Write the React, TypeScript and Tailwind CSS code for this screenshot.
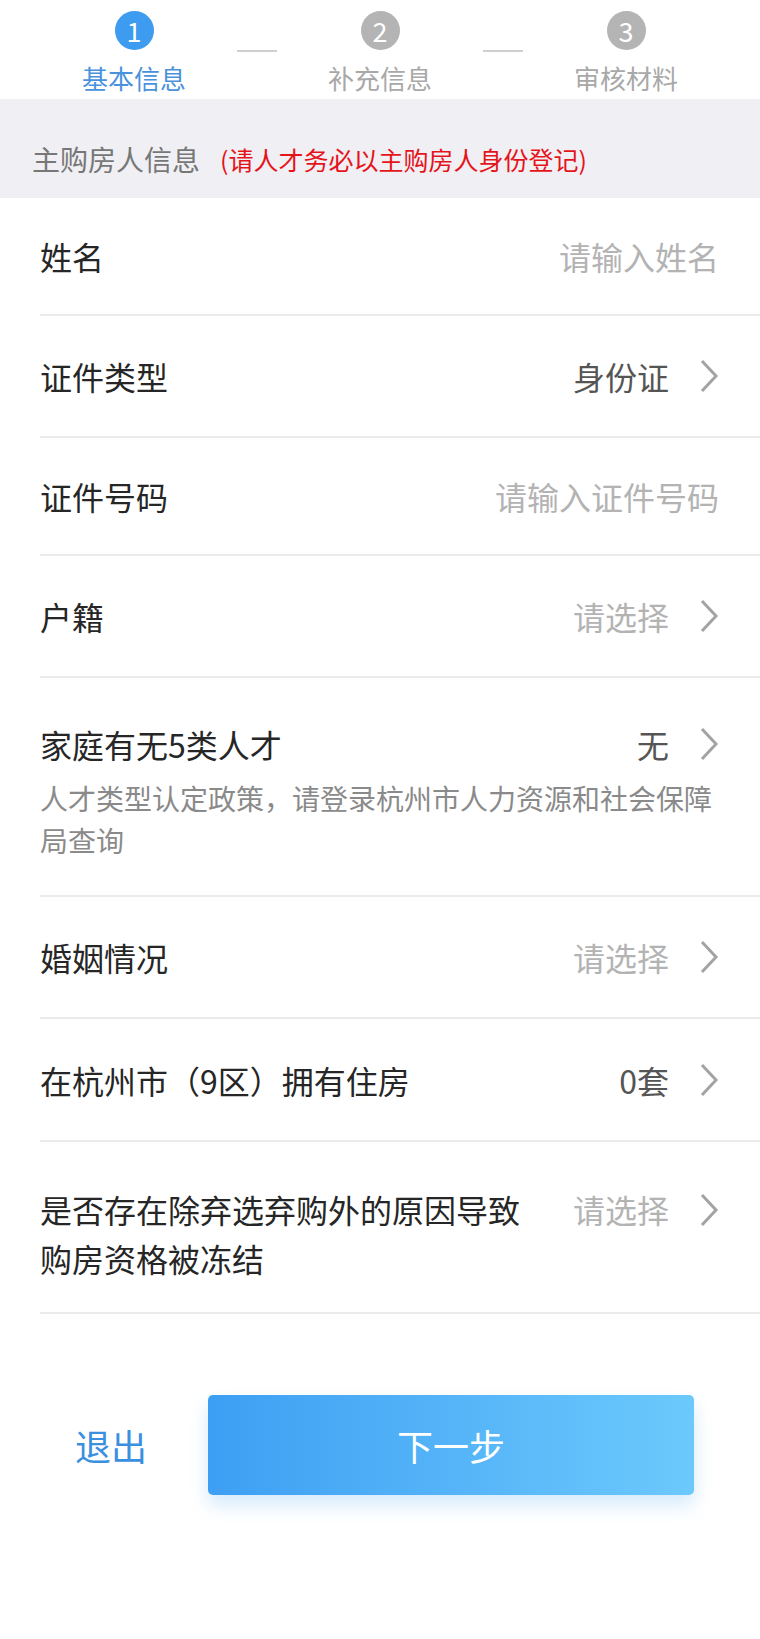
import React from "react";

const FONT = { fontFamily: '"Noto Sans CJK SC", "Noto Sans", sans-serif' };

function Chevron() {
  return (
    <svg width="20" height="34" viewBox="0 0 20 34" className="shrink-0">
      <polyline points="3,2 17,17 3,32" fill="none" stroke="#a3a3a3" strokeWidth="3" strokeLinejoin="miter" />
    </svg>
  );
}

function Step({ n, label, active, dash }: { n: number; label: string; active?: boolean; dash?: boolean }) {
  return (
    <div className="relative flex flex-col items-center">
      <div
        className={`mt-[11px] flex h-[39px] w-[39px] items-center justify-center rounded-full text-[27px] leading-none text-white ${
          active ? "bg-[#3d9cf0]" : "bg-[#b4b4b4]"
        }`}
      >
        {n}
      </div>
      <div className={`mt-[12px] text-[26px] leading-[32px] ${active ? "text-[#4a92dc]" : "text-[#a8a8a8]"}`}>{label}</div>
      {dash && <div className="absolute right-[-20px] top-[50px] h-[2px] w-[40px] bg-[#cfcfcf]" />}
    </div>
  );
}

function Row({
  label,
  value,
  placeholder,
  arrow,
  h,
}: {
  label: string;
  value: string;
  placeholder?: boolean;
  arrow?: boolean;
  h: string;
}) {
  return (
    <div className={`flex items-center border-b-2 border-[#ebebeb] pr-[41px] ${h}`}>
      <div className="flex-1 text-[32px] leading-[44px] text-[#262626]">{label}</div>
      <div className={`text-[32px] leading-[44px] ${placeholder ? "text-[#b3b3b3]" : "text-[#555555]"}`}>{value}</div>
      {arrow && (
        <div className="ml-[30px]">
          <Chevron />
        </div>
      )}
    </div>
  );
}

export default function App() {
  return (
    <div className="min-h-[1639px] w-[760px] bg-white" style={FONT}>
      {/* steps */}
      <div className="grid h-[99px] grid-cols-3 px-[11px]">
        <Step n={1} label="基本信息" active dash />
        <Step n={2} label="补充信息" dash />
        <Step n={3} label="审核材料" />
      </div>

      {/* section header */}
      <div className="flex h-[99px] items-start bg-[#f0eff4] pl-[32px] pt-[40px]">
        <span className="text-[28px] leading-[40px] text-[#777777]">主购房人信息</span>
        <span className="ml-[20px] text-[25px] leading-[40px] text-[#e5141b]">(请人才务必以主购房人身份登记)</span>
      </div>

      {/* form */}
      <div className="pl-[40px]">
        <Row label="姓名" value="请输入姓名" placeholder h="h-[118px]" />
        <Row label="证件类型" value="身份证" arrow h="h-[122px]" />
        <Row label="证件号码" value="请输入证件号码" placeholder h="h-[118px]" />
        <Row label="户籍" value="请选择" placeholder arrow h="h-[122px]" />

        <div className="border-b-2 border-[#ebebeb] pb-[34px] pr-[41px] pt-[44px]">
          <div className="flex items-center">
            <div className="flex-1 text-[32px] leading-[44px] text-[#262626]">家庭有无5类人才</div>
            <div className="text-[32px] leading-[44px] text-[#555555]">无</div>
            <div className="ml-[30px]">
              <Chevron />
            </div>
          </div>
          <div className="mt-[11px] text-[28px] leading-[42px] text-[#8a8a8a]">
            人才类型认定政策，请登录杭州市人力资源和社会保障局查询
          </div>
        </div>

        <Row label="婚姻情况" value="请选择" placeholder arrow h="h-[122px]" />
        <Row label="在杭州市（9区）拥有住房" value="0套" arrow h="h-[123px]" />

        <div className="flex items-start border-b-2 border-[#ebebeb] pb-[29px] pr-[41px] pt-[43px]">
          <div className="w-[492px] shrink-0 text-[32px] leading-[49px] text-[#262626]">
            是否存在除弃选弃购外的原因导致购房资格被冻结
          </div>
          <div className="flex flex-1 items-center justify-end">
            <div className="text-[32px] leading-[49px] text-[#b3b3b3]">请选择</div>
            <div className="ml-[30px]">
              <Chevron />
            </div>
          </div>
        </div>
      </div>

      {/* actions */}
      <div className="mt-[81px] flex items-center pl-[75px]">
        <div className="w-[133px] text-[36px] leading-[48px] text-[#3b8fdf]">退出</div>
        <button className="flex h-[100px] w-[486px] items-center justify-center rounded-[5px] bg-gradient-to-r from-[#3d9ff3] to-[#6cc9fc] text-[36px] text-white shadow-[0_10px_18px_rgba(64,158,240,0.22)]">
          下一步
        </button>
      </div>
    </div>
  );
}
